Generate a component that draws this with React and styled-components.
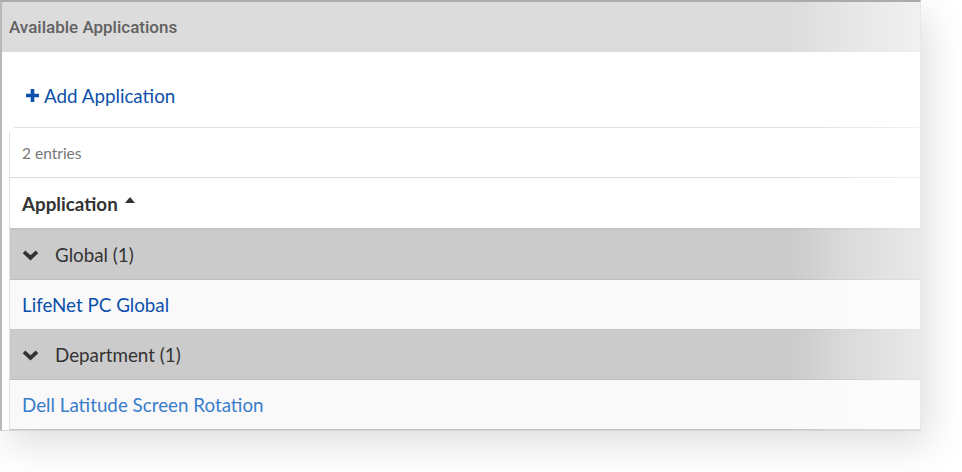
import React from 'react';
import styled, { createGlobalStyle } from 'styled-components';

const Global = createGlobalStyle`
  html, body {
    margin: 0;
    padding: 0;
    background: #fff;
  }
  body {
    font-family: Lato, "Open Sans", sans-serif;
  }
`;

const Stage = styled.div`
  width: 962px;
  height: 472px;
  overflow: hidden;
`;

const Panel = styled.section`
  position: relative;
  width: 918px;
  height: 428px;
  border-top: 2px solid #ababab;
  border-left: 2px solid #b8b8b8;
  border-right: 1px solid #e8e8e8;
  border-bottom: 1px solid #d6d6d6;
  background: #fff;
  overflow: hidden;
  box-shadow: 8px 14px 36px rgba(0, 0, 0, 0.13);
  display: flex;
  flex-direction: column;
`;

const Fade = styled.div`
  position: absolute;
  top: 0;
  right: 0;
  bottom: 0;
  width: 130px;
  pointer-events: none;
  background: linear-gradient(
    to right,
    rgba(255, 255, 255, 0) 0%,
    rgba(255, 255, 255, 0.3) 45%,
    rgba(255, 255, 255, 0.58) 100%
  );
`;

const PanelHeader = styled.header`
  height: 50px;
  flex: none;
  background: #dcdcdc;
  display: flex;
  align-items: center;
  padding-left: 7px;
  font-family: Roboto, "Open Sans", sans-serif;
  font-weight: 500;
  font-size: 17px;
  color: #626262;
`;

const PanelBody = styled.div`
  flex: 1;
  display: flex;
  flex-direction: column;
  padding-left: 7px;
`;

const AddLink = styled.a`
  display: flex;
  align-items: center;
  gap: 4px;
  height: 63px;
  padding-top: 12px;
  padding-left: 16px;
  font-size: 18.8px;
  color: #0b50aa;
  text-decoration: none;
  cursor: pointer;
`;

const Card = styled.div`
  width: 1000px;
  border: 1px solid #dedede;
  border-right: none;
  border-bottom: none;
  border-top-left-radius: 8px;
  display: flex;
  flex-direction: column;
`;

const Row = styled.div`
  height: ${(p) => p.h || 49}px;
  display: flex;
  align-items: center;
  gap: ${(p) => (p.group ? 16 : 0)}px;
  padding-left: 12px;
  background: ${(p) => (p.group ? '#cbcbcb' : p.striped ? '#f9f9f9' : '#fff')};
  border-bottom: ${(p) => p.line || '1px solid #dcdcdc'};
  font-size: ${(p) => (p.small ? 15.5 : 18.8)}px;
  font-weight: ${(p) => (p.bold ? 700 : 400)};
  color: ${(p) => (p.small ? '#777' : '#333')};
  box-sizing: border-box;
`;

const Caret = styled.span`
  display: inline-block;
  margin-left: 7px;
  margin-bottom: 6px;
  width: 0;
  height: 0;
  border-left: 5px solid transparent;
  border-right: 5px solid transparent;
  border-bottom: 6px solid #333;
`;

const AppLink = styled.a`
  color: ${(p) => p.color};
  text-decoration: none;
  cursor: pointer;
`;

const Plus = () => (
  <svg width="15" height="15" viewBox="0 0 15 15">
    <path d="M7.5 1v13M1 7.5h13" stroke="#0b50aa" strokeWidth="3.6" />
  </svg>
);

const Chevron = () => (
  <svg width="17" height="12" viewBox="0 0 17 12">
    <path d="M2 2.8l6.5 6 6.5-6" fill="none" stroke="#333" strokeWidth="3.8" />
  </svg>
);

const groups = [
  { name: 'Global (1)', app: 'LifeNet PC Global', color: '#0b50aa' },
  { name: 'Department (1)', app: 'Dell Latitude Screen Rotation', color: '#3a7ccc' },
];

export default function App() {
  return (
    <Stage>
      <Global />
      <Panel>
        <PanelHeader>Available Applications</PanelHeader>
        <PanelBody>
          <AddLink>
            <Plus />
            Add Application
          </AddLink>
          <Card>
            <Row small h={50}>2 entries</Row>
            <Row bold h={52} line="2px solid #c4c4c4">
              Application
              <Caret />
            </Row>
            {groups.map((g) => (
              <React.Fragment key={g.name}>
                <Row group h={50} line="1px solid #bdbdbd">
                  <Chevron />
                  {g.name}
                </Row>
                <Row striped h={50} line="1px solid #c4c4c4">
                  <AppLink color={g.color}>{g.app}</AppLink>
                </Row>
              </React.Fragment>
            ))}
          </Card>
        </PanelBody>
        <Fade />
      </Panel>
    </Stage>
  );
}
